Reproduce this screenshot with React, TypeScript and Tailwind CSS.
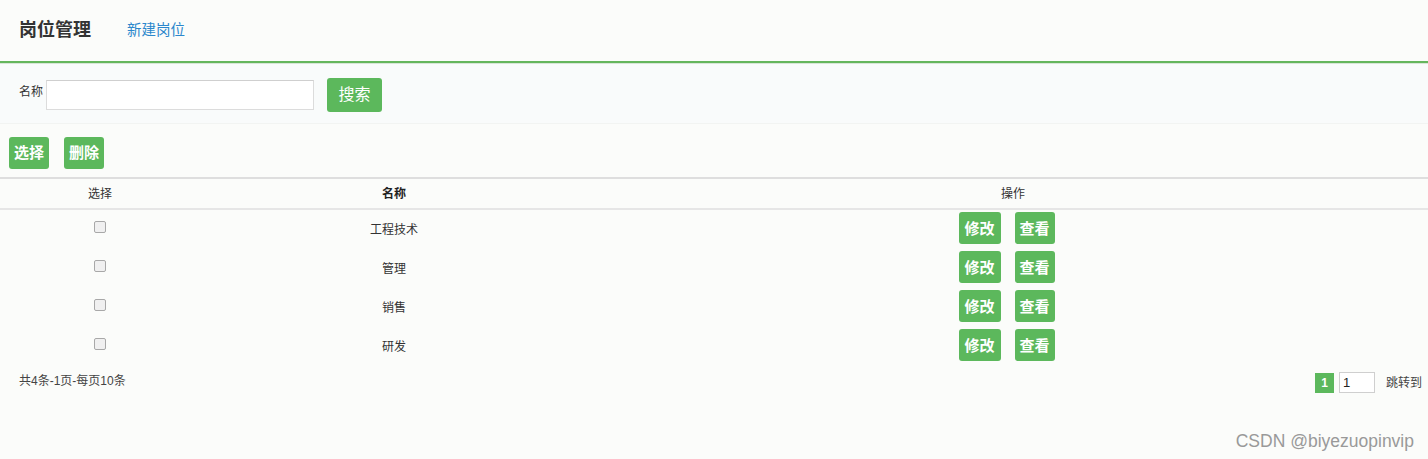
import React from "react";

const rows = ["工程技术", "管理", "销售", "研发"];

function GreenBtn({ children, className = "" }: { children: React.ReactNode; className?: string }) {
  return (
    <button
      className={`flex items-center justify-center rounded-[3px] bg-[#5cb85c] text-white font-bold text-[15px] leading-none ${className}`}
    >
      {children}
    </button>
  );
}

export default function App() {
  return (
    <div
      className="w-[1428px] h-[459px] bg-[#fbfcfa] text-[#333] overflow-hidden relative"
      style={{ fontFamily: '"Liberation Sans", "Noto Sans CJK SC", sans-serif' }}
    >
      {/* Header */}
      <div className="h-[61px] flex items-center pl-[19px]">
        <span className="text-[18px] font-bold text-[#333]">岗位管理</span>
        <span className="text-[14.5px] text-[#2b87cc] ml-[36px]">新建岗位</span>
      </div>
      <div className="h-[2px] bg-[#65b65d]" />
      <div className="h-[1px] bg-[#d8e6d8]" />

      {/* Search */}
      <div className="bg-[#f9fbfb] h-[60px] flex items-center pl-[19px] border-b border-[#f2f4f2]">
        <span className="text-[12px] text-[#333] mt-[-4px]">名称</span>
        <input
          className="ml-[3px] w-[268px] h-[30px] bg-white border border-[#dcdcdc] border-t-[#cfcfcf] outline-none mt-[2px]"
        />
        <button className="ml-[13px] w-[55px] h-[34px] rounded-[3px] bg-[#5cb85c] text-white text-[16px] mt-[2px]">
          搜索
        </button>
      </div>

      {/* Buttons */}
      <div className="flex items-center gap-[15px] pl-[9px] h-[53px] pt-[4px]">
        <GreenBtn className="w-[40px] h-[32px]">选择</GreenBtn>
        <GreenBtn className="w-[40px] h-[32px]">删除</GreenBtn>
      </div>

      {/* Table */}
      <div className="border-t-2 border-[#dedede]">
        <div className="flex h-[31px] items-center border-b-2 border-[#e6e6e6] text-[12px]">
          <div className="w-[200px] text-center text-[#333]">选择</div>
          <div className="w-[388px] text-center font-bold text-[#222]">名称</div>
          <div className="flex-1 text-center text-[#333] pl-[10px]">操作</div>
        </div>
        {rows.map((r) => (
          <div key={r} className="flex h-[39px] items-center text-[12px]">
            <div className="w-[200px] flex justify-center">
              <span className="w-[12px] h-[12px] rounded-[2px] border border-[#a8a8a8] bg-[#f0f0f0] mt-[-6px]" />
            </div>
            <div className="w-[388px] text-center text-[#333]">{r}</div>
            <div className="flex-1 flex justify-center pr-[3px] gap-[14px] mb-[3px]">
              <GreenBtn className="w-[42px] h-[32px]">修改</GreenBtn>
              <GreenBtn className="w-[40px] h-[32px]">查看</GreenBtn>
            </div>
          </div>
        ))}
      </div>

      {/* Footer */}
      <div className="flex items-start justify-between pl-[19px] pr-[6px] mt-[6px]">
        <span className="text-[12px] text-[#444]">共4条-1页-每页10条</span>
        <div className="flex items-center mt-[0px]">
          <span className="w-[19px] h-[20px] bg-[#5cb85c] text-white text-[12px] font-bold flex items-center justify-center">1</span>
          <input
            defaultValue="1"
            className="ml-[5px] w-[36px] h-[21px] bg-white border border-[#cfcfcf] text-[13px] pl-[3px] outline-none text-[#222]"
          />
          <span className="ml-[11px] text-[12px] text-[#444]">跳转到</span>
        </div>
      </div>

      <div className="absolute right-[14px] top-[428px] text-[17.5px] text-[#999]">CSDN @biyezuopinvip</div>
    </div>
  );
}
